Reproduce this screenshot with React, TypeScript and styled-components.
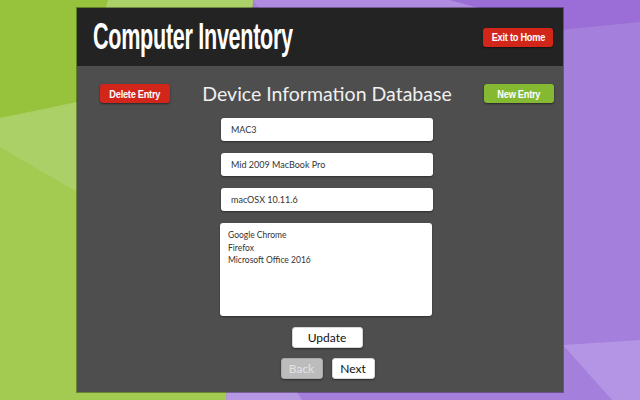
import React from 'react'
import styled, { createGlobalStyle } from 'styled-components'

const GlobalStyle = createGlobalStyle`
  html, body {
    margin: 0;
    padding: 0;
    width: 640px;
    height: 400px;
    overflow: hidden;
  }
  body {
    font-family: 'Lato', 'Liberation Sans', sans-serif;
  }
`

const Page = styled.div`
  position: relative;
  width: 640px;
  height: 400px;
  box-sizing: border-box;
  padding: 8px 77px;
  display: flex;
`

const Backdrop = styled.svg`
  position: absolute;
  inset: 0;
  width: 640px;
  height: 400px;
  z-index: 0;
`

const Panel = styled.div`
  position: relative;
  z-index: 1;
  flex: 1;
  display: flex;
  flex-direction: column;
  background: #4e4e4e;
  box-shadow: 0 0 0 1px rgba(0, 0, 0, 0.35);
`

const Header = styled.header`
  height: 58px;
  flex-shrink: 0;
  background: #232323;
  display: flex;
  align-items: center;
  justify-content: space-between;
  padding: 0 10px 0 16px;
`

const Title = styled.h1`
  margin: 0;
  font-family: 'Liberation Sans', 'Arial', sans-serif;
  font-weight: 700;
  font-size: 36px;
  letter-spacing: -0.5px;
  color: #ffffff;
  transform: scaleX(0.6);
  transform-origin: left center;
  white-space: nowrap;
  line-height: 1;
`

const ActionButton = styled.button<{ $tone: 'red' | 'green' }>`
  width: 70px;
  height: 19px;
  padding: 0;
  border: none;
  border-radius: 3px;
  background: ${p => (p.$tone === 'red' ? '#d3261b' : '#86b932')};
  color: #ffffff;
  display: flex;
  align-items: center;
  justify-content: center;
  box-shadow: 0 1px 2px rgba(0, 0, 0, 0.5);
`

const ButtonLabel = styled.span`
  display: inline-block;
  font-family: 'Liberation Sans', 'Arial', sans-serif;
  font-weight: 700;
  font-size: 11.5px;
  letter-spacing: -0.3px;
  white-space: nowrap;
  transform: scaleX(0.8);
`

const Body = styled.main`
  flex: 1;
  display: flex;
  flex-direction: column;
  align-items: stretch;
  padding: 18px 9px 0 23px;
`

const TopRow = styled.div`
  display: flex;
  align-items: center;
  justify-content: space-between;
  height: 19px;
`

const Heading = styled.h2`
  margin: 0;
  font-family: 'Lato', 'Liberation Sans', sans-serif;
  font-weight: 400;
  font-size: 19.5px;
  color: #f0f0f0;
  white-space: nowrap;
`

const Form = styled.div`
  display: flex;
  flex-direction: column;
  align-items: center;
  margin-top: 15px;
  gap: 12px;
`

const Field = styled.div`
  width: 212px;
  height: 23px;
  box-sizing: border-box;
  padding: 0 10px;
  display: flex;
  align-items: center;
  background: #ffffff;
  border-radius: 3px;
  box-shadow: 0 1px 2px rgba(0, 0, 0, 0.4);
  font-family: 'Lato', 'Liberation Sans', sans-serif;
  font-size: 9px;
  color: #333333;
`

const Area = styled.div`
  width: 212px;
  height: 93px;
  box-sizing: border-box;
  padding: 6px 8px;
  background: #ffffff;
  border-radius: 3px;
  box-shadow: 0 1px 2px rgba(0, 0, 0, 0.4);
  font-family: 'Lato', 'Liberation Sans', sans-serif;
  font-size: 8.5px;
  line-height: 12.5px;
  color: #333333;
  margin-left: -2px;
`

const Controls = styled.div`
  display: flex;
  flex-direction: column;
  align-items: center;
  margin-top: 11px;
  gap: 10px;
`

const NavRow = styled.div`
  display: flex;
  gap: 9px;
  margin-left: 1px;
`

const PlainButton = styled.button<{ $w: number; $disabled?: boolean }>`
  width: ${p => p.$w}px;
  height: 21px;
  padding: 0;
  box-sizing: border-box;
  border: 1px solid ${p => (p.$disabled ? '#aaaaaa' : '#d8d8d8')};
  border-radius: 3px;
  background: ${p => (p.$disabled ? '#bcbcbc' : '#ffffff')};
  color: ${p => (p.$disabled ? '#e2e2e2' : '#111111')};
  font-family: 'Lato', 'Liberation Sans', sans-serif;
  font-size: 12px;
  box-shadow: 0 1px 2px rgba(0, 0, 0, 0.45);
`

const Background = () => (
  <Backdrop viewBox="0 0 640 400" preserveAspectRatio="none">
    <rect x="0" y="0" width="640" height="400" fill="#a47fdc" />
    <polygon points="449,0 640,0 640,22 560,30" fill="#9b6ed7" />
    <polygon points="253,0 449,0 560,30 300,60" fill="#b08ce0" />
    <polygon points="0,0 253,0 240,200 226,400 0,400" fill="#a3cb51" />
    <polygon points="108,0 253,0 240,80 77,104 0,118 0,0" fill="#acd168" />
    <polygon points="0,0 108,0 77,102 0,118" fill="#97c23b" />
    <polygon points="0,118 77,104 77,192 0,147" fill="#abd067" />
    <polygon points="226,400 240,300 302,400" fill="#b697e4" />
    <polygon points="563,345 640,340 640,400 612,400" fill="#b495e5" />
  </Backdrop>
)

export default function App() {
  return (
    <>
      <GlobalStyle />
      <Page>
        <Background />
        <Panel>
          <Header>
            <Title>Computer Inventory</Title>
            <ActionButton $tone="red">
              <ButtonLabel>Exit to Home</ButtonLabel>
            </ActionButton>
          </Header>
          <Body>
            <TopRow>
              <ActionButton $tone="red">
                <ButtonLabel>Delete Entry</ButtonLabel>
              </ActionButton>
              <Heading>Device Information Database</Heading>
              <ActionButton $tone="green">
                <ButtonLabel>New Entry</ButtonLabel>
              </ActionButton>
            </TopRow>
            <Form>
              <Field>MAC3</Field>
              <Field>Mid 2009 MacBook Pro</Field>
              <Field>macOSX 10.11.6</Field>
              <Area>
                Google Chrome
                <br />
                Firefox
                <br />
                Microsoft Office 2016
              </Area>
            </Form>
            <Controls>
              <PlainButton $w={71}>Update</PlainButton>
              <NavRow>
                <PlainButton $w={42} $disabled>
                  Back
                </PlainButton>
                <PlainButton $w={43}>Next</PlainButton>
              </NavRow>
            </Controls>
          </Body>
        </Panel>
      </Page>
    </>
  )
}
